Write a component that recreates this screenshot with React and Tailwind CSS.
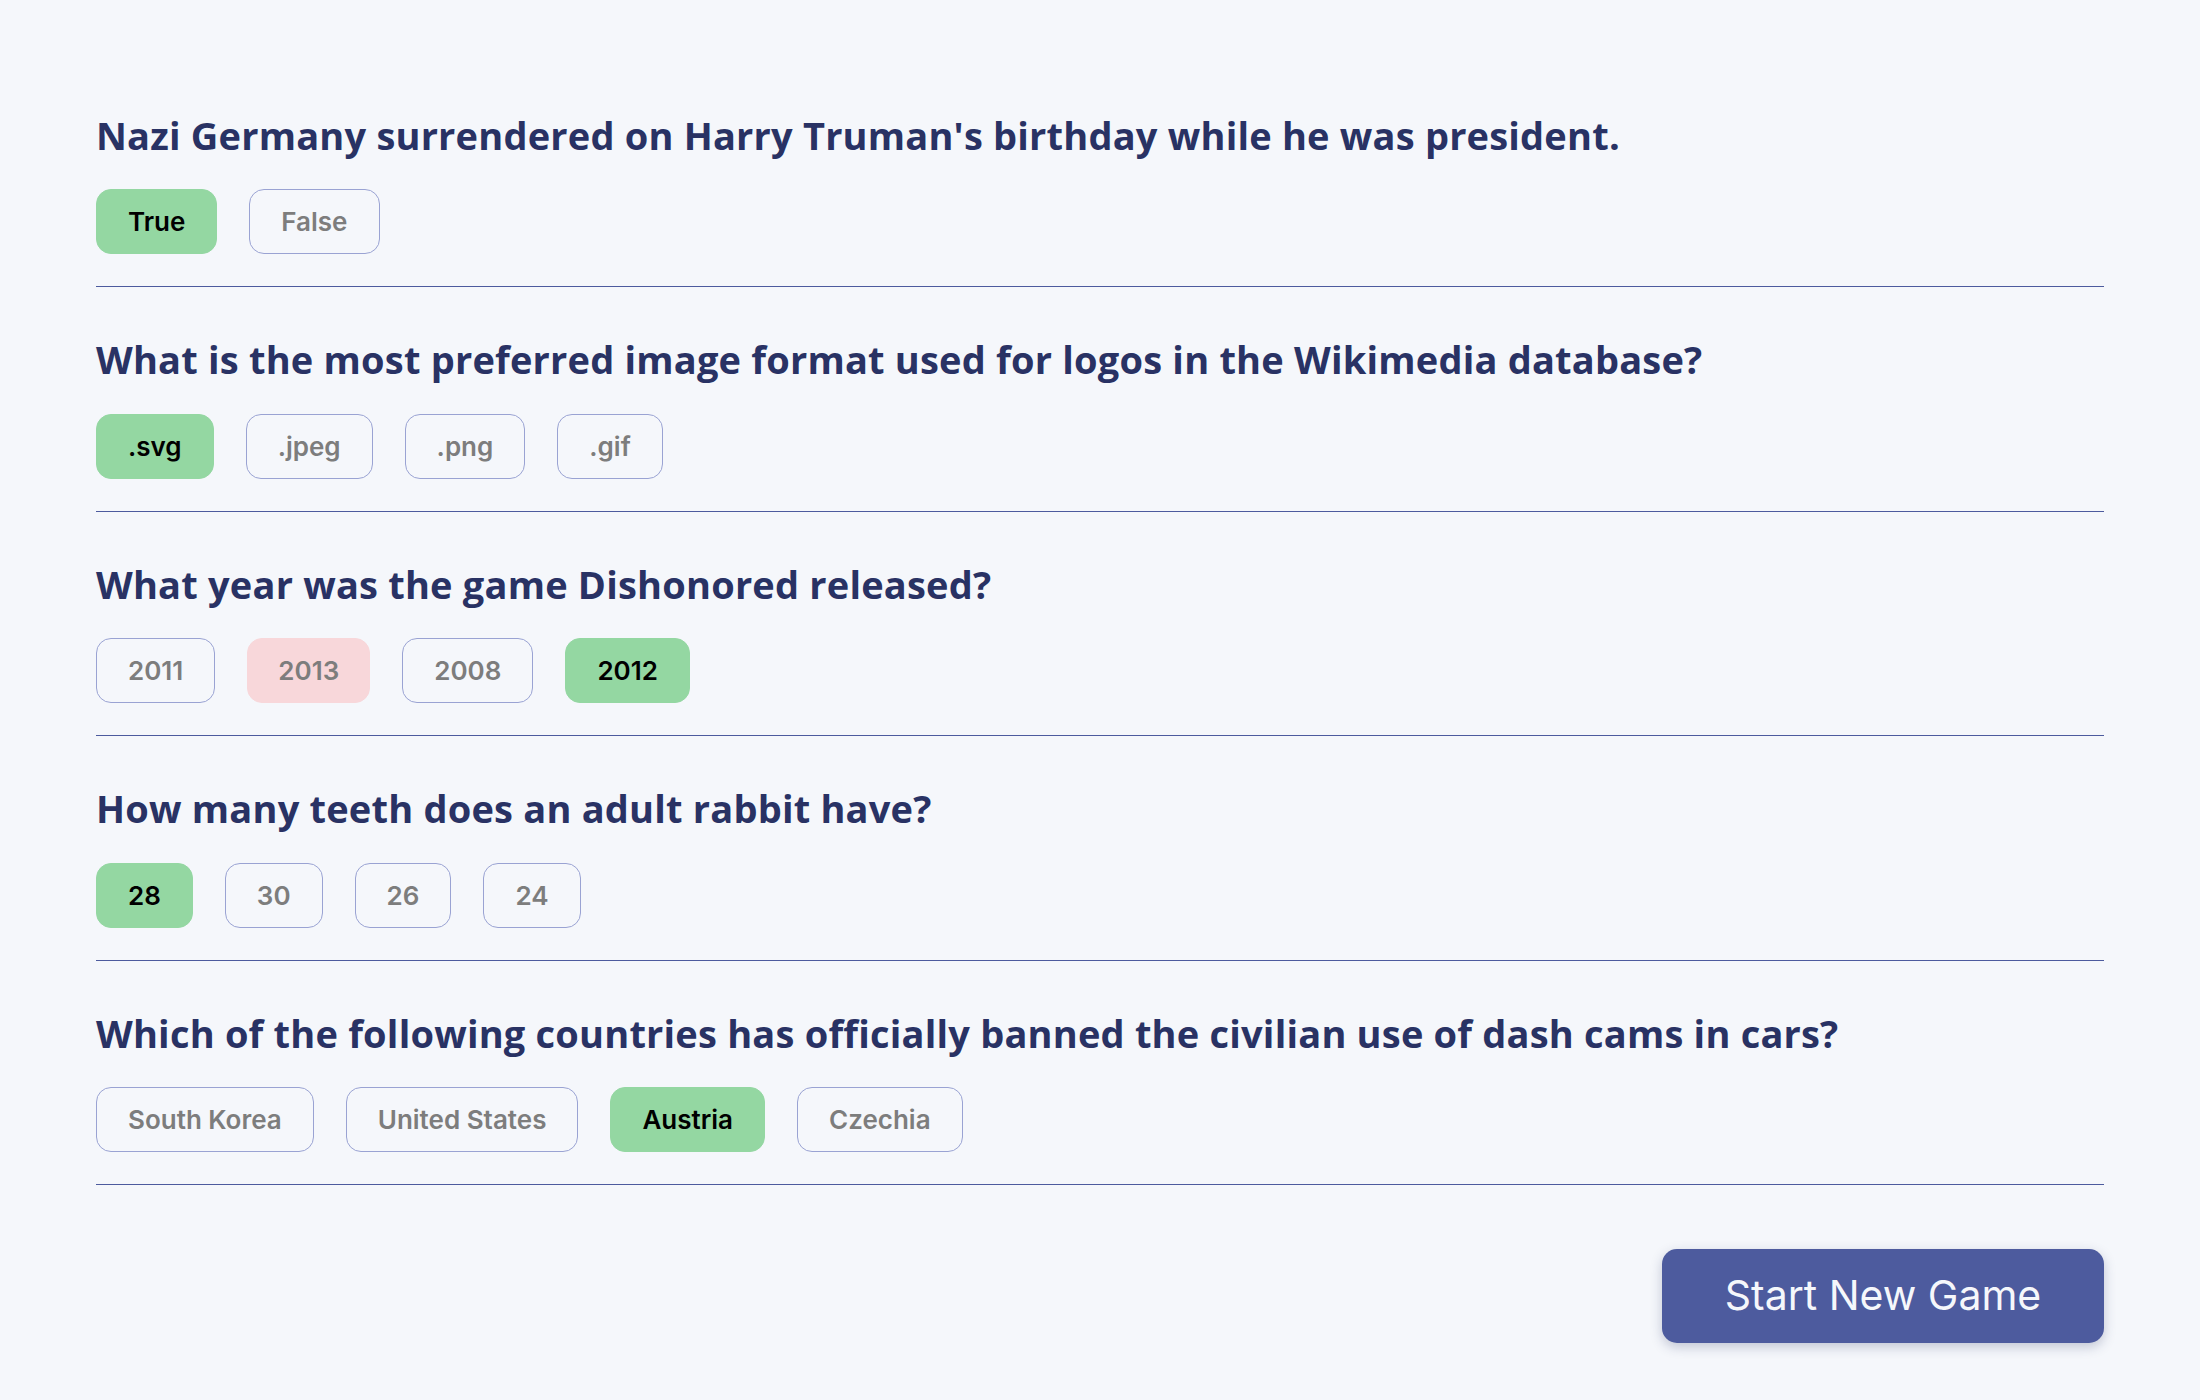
import React from 'react';

const questions = [
  {
    text: "Nazi Germany surrendered on Harry Truman's birthday while he was president.",
    answers: [
      { label: 'True', state: 'correct' },
      { label: 'False' },
    ],
  },
  {
    text: 'What is the most preferred image format used for logos in the Wikimedia database?',
    answers: [
      { label: '.svg', state: 'correct' },
      { label: '.jpeg' },
      { label: '.png' },
      { label: '.gif' },
    ],
  },
  {
    text: 'What year was the game Dishonored released?',
    answers: [
      { label: '2011' },
      { label: '2013', state: 'wrong' },
      { label: '2008' },
      { label: '2012', state: 'correct' },
    ],
  },
  {
    text: 'How many teeth does an adult rabbit have?',
    answers: [
      { label: '28', state: 'correct' },
      { label: '30' },
      { label: '26' },
      { label: '24' },
    ],
  },
  {
    text: 'Which of the following countries has officially banned the civilian use of dash cams in cars?',
    answers: [
      { label: 'South Korea' },
      { label: 'United States' },
      { label: 'Austria', state: 'correct' },
      { label: 'Czechia' },
    ],
  },
];

const AnswerButton = ({ label, state }) => {
  // correct answers go green, a wrong pick goes pink, the rest stay outlined
  if (state === 'correct') {
    return (
      <div className="h-[65px] px-[31px] flex items-center rounded-[15px] bg-[#94d7a2] text-black border border-[#94d7a2]">
        {label}
      </div>
    );
  }
  if (state === 'wrong') {
    return (
      <div className="h-[65px] px-[30px] flex items-center rounded-[15px] bg-[#f8d7da] text-[#7d7d7d] border border-[#f8d7da]">
        {label}
      </div>
    );
  }
  return (
    <div className="h-[65px] px-[31px] flex items-center rounded-[15px] border border-[#9aa3d3] text-[#7d7d7d]">
      {label}
    </div>
  );
};

export default function App() {
  return (
    <div className="min-h-[1400px] bg-[#f5f7fb] px-24 pt-[62.5px]">
      {questions.map((q) => (
        <div key={q.text} className="pt-[50px] pb-[32px] border-b border-[#4d5b9e]">
          <h2 className="font-['Open_Sans',sans-serif] font-bold text-[38px] leading-[44px] tracking-[0.2px] text-[#293264]">
            {q.text}
          </h2>
          <div className="mt-[32.5px] flex gap-8 font-['Inter',sans-serif] font-semibold text-[26px]">
            {q.answers.map((a) => (
              <AnswerButton key={a.label} {...a} />
            ))}
          </div>
        </div>
      ))}
      <div className="flex justify-end mt-[64px]">
        <button className="h-[94px] w-[442px] rounded-[15px] bg-[#4d5b9e] text-[#f5f7fb] font-['Inter',sans-serif] text-[41px] shadow-[0_4px_12px_rgba(41,50,100,0.25)]">
          Start New Game
        </button>
      </div>
    </div>
  );
}
